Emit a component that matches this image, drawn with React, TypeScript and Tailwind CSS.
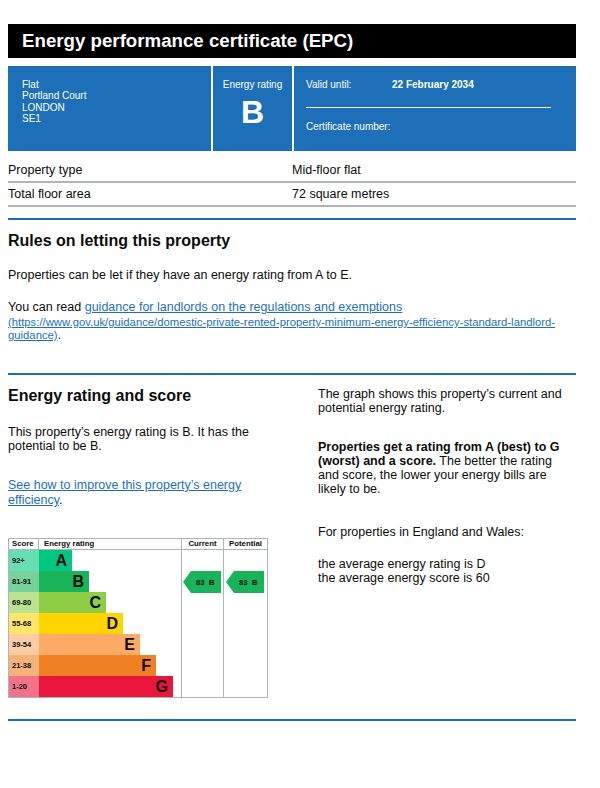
import React from "react";

const bands = [
  { score: "92+", letter: "A", color: "bg-[#00c781]", light: "bg-[#66ddb3]", w: "w-[33px]" },
  { score: "81-91", letter: "B", color: "bg-[#19b459]", light: "bg-[#75d29b]", w: "w-[50px]" },
  { score: "69-80", letter: "C", color: "bg-[#8dce46]", light: "bg-[#bbe290]", w: "w-[67px]" },
  { score: "55-68", letter: "D", color: "bg-[#ffd500]", light: "bg-[#ffe666]", w: "w-[84px]" },
  { score: "39-54", letter: "E", color: "bg-[#fcaa65]", light: "bg-[#fdcca3]", w: "w-[101px]" },
  { score: "21-38", letter: "F", color: "bg-[#ef8023]", light: "bg-[#f5b37b]", w: "w-[117px]" },
  { score: "1-20", letter: "G", color: "bg-[#e9153b]", light: "bg-[#f27389]", w: "w-[134px]" },
];

function Arrow() {
  return (
    <svg width="38" height="22" viewBox="0 0 38 22" className="block">
      <polygon points="0,11 8,0 38,0 38,22 8,22" fill="#19b459" />
      <text x="13" y="14" fontSize="7.5" fontWeight="bold" fill="#0b0c0c" fontFamily="'Liberation Sans', Arial, sans-serif">83</text>
      <text x="26" y="14" fontSize="7.5" fontWeight="bold" fill="#0b0c0c" fontFamily="'Liberation Sans', Arial, sans-serif">B</text>
    </svg>
  );
}

function Chart() {
  return (
    <div className="w-[260px] border border-[#b1b4b6] text-[#0b0c0c]">
      <div className="flex h-[11px] border-b border-[#b1b4b6] text-[7.8px] font-bold leading-[10px]">
        <div className="w-[30px] border-r border-[#b1b4b6] pl-[3px]">Score</div>
        <div className="w-[142px] pl-[5px]">Energy rating</div>
        <div className="w-[42px] border-l border-[#b1b4b6] text-center">Current</div>
        <div className="flex-1 border-l border-[#b1b4b6] text-center">Potential</div>
      </div>
      <div className="flex">
        <div className="w-[172px]">
          {bands.map((b) => (
            <div key={b.letter} className="flex h-[21px]">
              <div className={`w-[30px] ${b.light} flex items-center pl-[3px] text-[7.5px] font-bold`}>{b.score}</div>
              <div className={`${b.w} ${b.color} flex items-center justify-end pr-[5px] text-[16px] font-bold leading-none`}>{b.letter}</div>
            </div>
          ))}
        </div>
        <div className="w-[42px] border-l border-[#b1b4b6] pt-[21px] pl-[1px]">
          <Arrow />
        </div>
        <div className="flex-1 border-l border-[#b1b4b6] pt-[21px] pl-[2px]">
          <Arrow />
        </div>
      </div>
    </div>
  );
}

export default function App() {
  return (
    <div className="w-[600px] min-h-[788px] bg-white pt-[24px] pl-[8px] font-['Liberation_Sans',Arial,sans-serif] text-[#0b0c0c]">
      <div className="w-[568px]">
        <div className="h-[34px] bg-black flex items-center pl-[14px] text-white font-bold text-[18.7px] leading-none">
          Energy performance certificate (EPC)
        </div>

        <div className="mt-[8px] h-[85px] flex gap-[2px] text-white text-[10px] leading-[11.3px]">
          <div className="w-[203px] bg-[#1d70b8] pt-[13px] pl-[14px]">
            <div>Flat</div>
            <div>Portland Court</div>
            <div>LONDON</div>
            <div>SE1</div>
          </div>
          <div className="w-[79px] bg-[#1d70b8] pt-[13px] text-center">
            <div>Energy rating</div>
            <div className="mt-[6px] text-[32px] font-bold leading-[32px]">B</div>
          </div>
          <div className="flex-1 bg-[#1d70b8] pt-[13px] pl-[12px]">
            <div className="flex">
              <div className="w-[86px]">Valid until:</div>
              <div className="font-bold">22 February 2034</div>
            </div>
            <div className="mt-[17px] h-px w-[245px] bg-white" />
            <div className="mt-[13px]">Certificate number:</div>
          </div>
        </div>

        <div className="mt-[8px] text-[12.5px]">
          <div className="grid grid-cols-[284px_1fr] h-[24px] items-center border-b-2 border-[#b1b4b6] pt-[1px]">
            <div>Property type</div>
            <div>Mid-floor flat</div>
          </div>
          <div className="grid grid-cols-[284px_1fr] h-[24px] items-center border-b-2 border-[#b1b4b6]">
            <div>Total floor area</div>
            <div>72 square metres</div>
          </div>
        </div>

        <div className="mt-[11px] h-[2px] bg-[#1d70b8]" />

        <h2 className="mt-[11px] text-[16px] font-bold leading-[20px]">Rules on letting this property</h2>
        <p className="mt-[17px] text-[12.5px] leading-[14px]">Properties can be let if they have an energy rating from A to E.</p>
        <p className="mt-[18px] text-[12.5px] leading-[14px]">
          You can read{" "}
          <a className="text-[#1d70b8] underline">guidance for landlords on the regulations and exemptions</a>
        </p>
        <div className="mt-[2px] text-[11.3px] leading-[13px]">
          <a className="text-[#1d70b8] underline">
            (https://www.gov.uk/guidance/domestic-private-rented-property-minimum-energy-efficiency-standard-landlord-
            <br />
            guidance)
          </a>
          <span className="text-[12.5px]">.</span>
        </div>

        <div className="mt-[31px] h-[2px] bg-[#1d70b8]" />

        <div className="mt-[11px] flex gap-[30px]">
          <div className="w-[280px]">
            <h2 className="text-[16px] font-bold leading-[20px]">Energy rating and score</h2>
            <p className="mt-[19px] text-[12.5px] leading-[14px]">
              This property’s energy rating is B. It has the potential to be B.
            </p>
            <p className="mt-[25px] text-[12.5px] leading-[15px]">
              <a className="text-[#1d70b8] underline">See how to improve this property’s energy efficiency</a>.
            </p>
            <div className="mt-[30px]">
              <Chart />
            </div>
          </div>
          <div className="w-[250px] pt-[1px] text-[12.5px] leading-[14.3px]">
            <p>The graph shows this property’s current and potential energy rating.</p>
            <p className="mt-[24px]">
              <b>Properties get a rating from A (best) to G (worst) and a score.</b> The better the rating and score, the lower your energy bills are likely to be.
            </p>
            <p className="mt-[28px]">For properties in England and Wales:</p>
            <p className="mt-[18px]">
              the average energy rating is D
              <br />
              the average energy score is 60
            </p>
          </div>
        </div>

        <div className="mt-[21px] h-[2px] bg-[#1d70b8]" />
      </div>
    </div>
  );
}
